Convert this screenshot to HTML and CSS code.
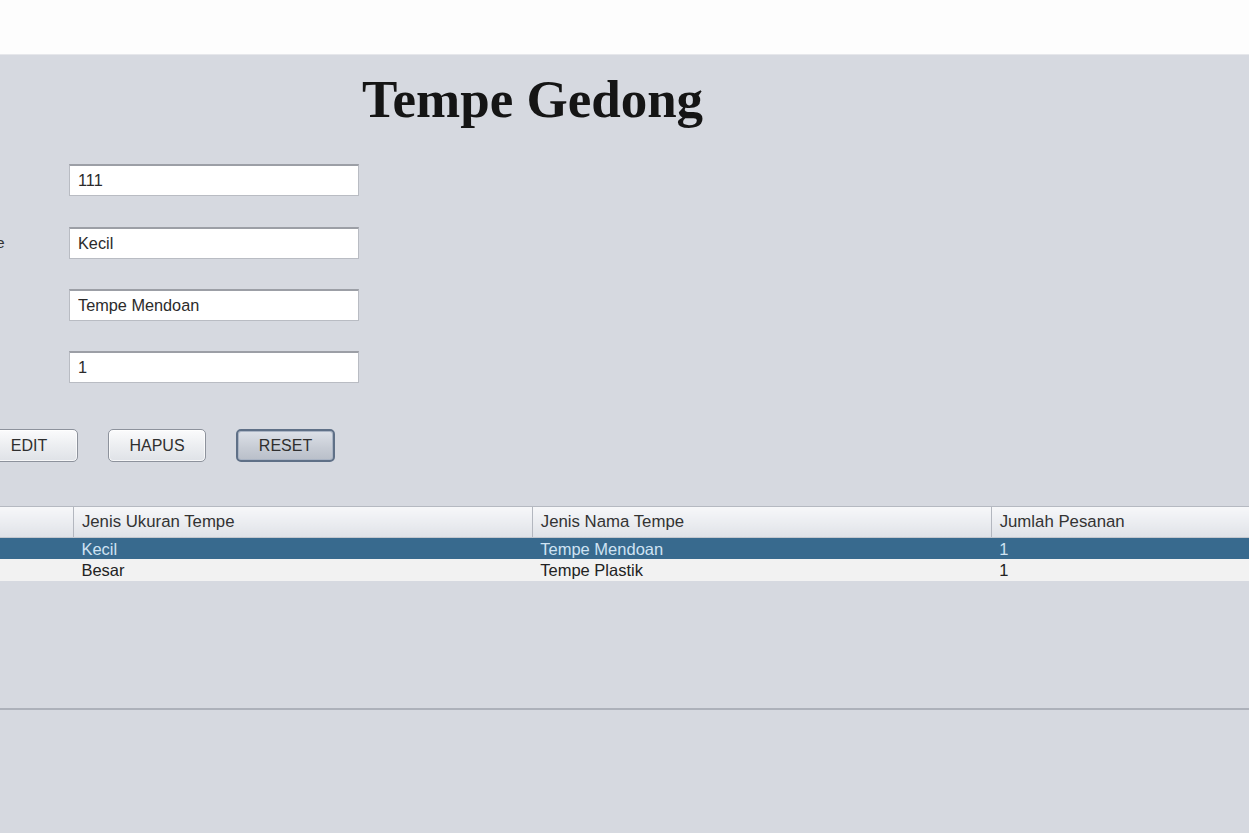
FILE: index.html
```html
<!DOCTYPE html>
<html lang="en">
<head>
    <meta charset="UTF-8">
    <meta name="viewport" content="width=device-width, initial-scale=1.0">
    <title>Tempe Gedong</title>
    <link rel="stylesheet" href="styles.css">
</head>
<body>
    <div class="top-band"></div>

    <div class="panel">
        <h1 class="title">Tempe Gedong</h1>

        <div class="form">
            <div class="form-row">
                <label class="field-label">No Pesanan</label>
                <input type="text" class="field" value="111">
            </div>
            <div class="form-row">
                <label class="field-label">Ukuran Tempe</label>
                <input type="text" class="field" value="Kecil">
            </div>
            <div class="form-row">
                <label class="field-label">Nama Tempe</label>
                <input type="text" class="field" value="Tempe Mendoan">
            </div>
            <div class="form-row">
                <label class="field-label">Jumlah</label>
                <input type="text" class="field" value="1">
            </div>
        </div>

        <div class="buttons">
            <button class="btn">EDIT</button>
            <button class="btn">HAPUS</button>
            <button class="btn btn-focus">RESET</button>
        </div>

        <!-- scroll pane with the order table -->
        <div class="table-wrap">
            <table class="orders">
                <thead>
                    <tr>
                        <th>No Pesanan</th>
                        <th>Jenis Ukuran Tempe</th>
                        <th>Jenis Nama Tempe</th>
                        <th>Jumlah Pesanan</th>
                    </tr>
                </thead>
                <tbody>
                    <tr class="selected">
                        <td>111</td>
                        <td>Kecil</td>
                        <td>Tempe Mendoan</td>
                        <td>1</td>
                    </tr>
                    <tr>
                        <td>112</td>
                        <td>Besar</td>
                        <td>Tempe Plastik</td>
                        <td>1</td>
                    </tr>
                </tbody>
            </table>
        </div>
    </div>
</body>
</html>
```

FILE: styles.css
```css
body {
    margin: 0;
    background-color: #fdfdfd;
    font-family: "Liberation Sans", Arial, sans-serif;
    color: #2b2b2b;
    overflow: hidden;
}

.top-band {
    height: 54px;
    background-color: #fdfdfd;
    border-bottom: 1px solid #e6e7eb;
}

.panel {
    height: 778px;
    background-color: #d6d9e0;
    padding-top: 14px;
    box-sizing: border-box;
}

.title {
    margin: 0 0 35px 362px;
    font-family: "Liberation Serif", "Times New Roman", serif;
    font-size: 53px;
    line-height: 60px;
    font-weight: bold;
    color: #151515;
}

.form {
    margin-left: -96px;
}

.form-row {
    display: flex;
    align-items: center;
    height: 32px;
    margin-bottom: 30px;
}

.form-row:first-child {
    margin-bottom: 31px;
}

.field-label {
    width: 165px;
    flex-shrink: 0;
    font-size: 15.5px;
    color: #333;
    white-space: nowrap;
}

.field {
    width: 290px;
    height: 32px;
    box-sizing: border-box;
    margin: 0;
    padding: 0 8px;
    border: 1px solid #b9bcc3;
    border-top: 2px solid #9c9fa6;
    background-color: #fff;
    font-family: "Liberation Sans", Arial, sans-serif;
    font-size: 16.3px;
    color: #2b2b2b;
    outline: none;
}

.buttons {
    display: flex;
    gap: 30px;
    margin-left: -20px;
    margin-top: 46px;
}

.btn {
    width: 98px;
    height: 33px;
    padding: 0;
    border: 1px solid #8d929c;
    border-radius: 5px;
    background: linear-gradient(#fbfbfc, #eceef1 50%, #dfe2e7);
    font-family: "Liberation Sans", Arial, sans-serif;
    font-size: 16px;
    color: #2f2f2f;
    box-shadow: inset 0 0 0 1px rgba(255, 255, 255, 0.7);
}

.btn-focus {
    width: 99px;
    border: 2px solid #5f7087;
    background: linear-gradient(#dde1e8, #c6cbd4 60%, #b9bfc9);
    box-shadow: inset 0 0 0 1px #aab4c4;
}

.table-wrap {
    margin-top: 44px;
    height: 201px;
    overflow: hidden;
    border-top: 1px solid #b5b9c1;
    border-bottom: 2px solid #adb1ba;
}

.orders {
    margin-left: -386px;
    width: 1836px;
    table-layout: fixed;
    border-collapse: collapse;
}

.orders th {
    height: 30px;
    padding: 0 8px;
    text-align: left;
    font-weight: normal;
    font-size: 16.8px;
    color: #333;
    background: linear-gradient(#f6f7f9, #e9ebef 60%, #dfe2e7);
    border-left: 1px solid #b3b7bf;
    border-bottom: 1px solid #c3c7ce;
}

.orders td {
    height: 21px;
    padding: 0 8px;
    font-size: 16.5px;
    line-height: 18px;
    color: #222;
    background-color: #f2f2f2;
}

.orders tr:last-child td {
    height: 22px;
}

.orders .selected td {
    background-color: #386a8e;
    color: #cfe3f3;
}
```
